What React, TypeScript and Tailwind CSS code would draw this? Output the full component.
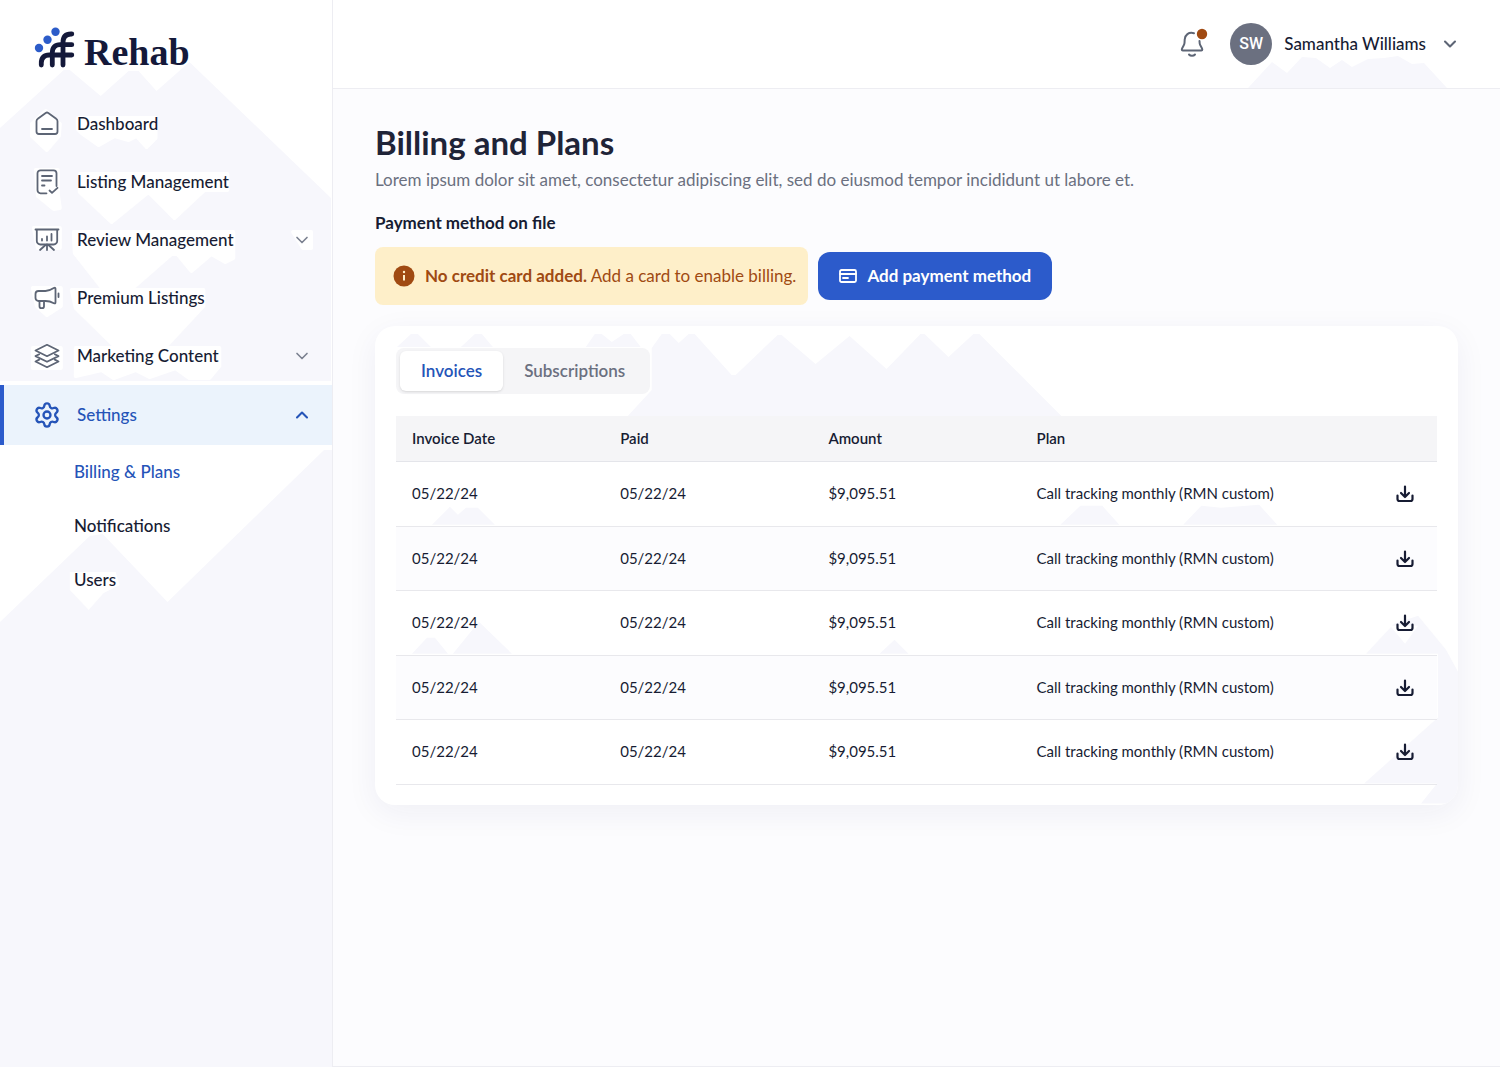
import React, { useState } from 'react';
import { ChevronDown, ChevronUp, Settings } from 'lucide-react';

type IconProps = { className?: string; children: React.ReactNode };

const LineIcon: React.FC<IconProps> = ({ className, children }) => (
  <svg
    viewBox="0 0 28 28"
    className={`h-7 w-7 shrink-0 ${className ?? ''}`}
    fill="none"
    stroke="currentColor"
    strokeWidth="1.8"
    strokeLinecap="round"
    strokeLinejoin="round"
    aria-hidden="true"
  >
    {children}
  </svg>
);

const HomeIcon = () => (
  <LineIcon>
    <path d="M3.5 11.2a3 3 0 0 1 1.3-2.5l7.9-5.8a2.4 2.4 0 0 1 2.6 0l7.9 5.8a3 3 0 0 1 1.3 2.500V21.500a2.500 2.500 0 0 1-2.500 2.500H6a2.500 2.500 0 0 1-2.500-2.500z" />
    <path d="M9 19h10" />
  </LineIcon>
);

const ListIcon = () => (
  <LineIcon>
    <path d="M13.500 25.300H7.500a3 3 0 0 1-3-3v-17a3 3 0 0 1 3-3h13a3 3 0 0 1 3 3V18" />
    <path d="M9 8h10M9 12.500h9M9 17.500h2.500M16.500 22.500l2.500 2.300 5.500-5" />
  </LineIcon>
);

const BoardIcon = () => (
  <LineIcon>
    <path d="M2.500 3.500h23M3.800 3.500V15a3.500 3.500 0 0 0 3.500 3.500h13.400a3.500 3.500 0 0 0 3.500-3.500V3.500" />
    <path d="M9 14.500v-1.500M14 14.500v-4M18.500 14.500V8M14 18.500V24M12.500 19l-5.500 5M15.500 19l5.500 5" />
  </LineIcon>
);

const MegaphoneIcon = () => (
  <LineIcon>
    <path d="M5.500 7h7c3 0 6-1.500 8.300-3q1.700-1 1.700.8v13.400q0 1.800-1.700 1C18.500 17.900 15.500 17 12.500 17H5.500A3 3 0 0 1 2.500 14v-4a3 3 0 0 1 3-3z" />
    <path d="M6.500 17v5.200a2 2 0 0 0 2 2h.5a2 2 0 0 0 2-2V17M25.500 9.500v3.500" />
  </LineIcon>
);

const LayersIcon = () => (
  <LineIcon>
    <path d="M14 2.800l11.500 5.700L14 14.200 2.500 8.500z" />
    <path d="M6.200 12.200l-3.700 1.900L14 19.800l11.500-5.700-3.700-1.900" />
    <path d="M6.200 17.600l-3.700 1.900L14 25.200l11.500-5.700-3.700-1.900" />
  </LineIcon>
);

const DownloadIcon = () => (
  <svg
    viewBox="0 0 24 24"
    className="h-6 w-6"
    fill="none"
    stroke="currentColor"
    strokeWidth="2.200"
    strokeLinecap="round"
    strokeLinejoin="round"
    aria-hidden="true"
  >
    <path d="M12 4.500v10M8 11l4 4 4-4M4.500 13.500V17a2 2 0 0 0 2 2h11a2 2 0 0 0 2-2v-3.500" />
  </svg>
);

const Logo = () => (
  <a href="#" className="flex h-10 items-center gap-2 text-[#14193a]">
    <svg viewBox="0 0 42 42" className="h-[42px] w-[42px] shrink-0" fill="none" aria-hidden="true">
      <g fill="#2c5cc9">
        <circle cx="21.500" cy="4.700" r="4.200" />
        <circle cx="13.500" cy="12.700" r="4.200" />
        <circle cx="5" cy="21" r="4.200" />
      </g>
      <g stroke="currentColor" strokeWidth="4.800" strokeLinecap="round">
        <path d="M7.300 38v-2q0-8 8-8h22.500" />
        <path d="M18.300 38V25.700q0-8 8-8h11.500" />
        <path d="M29 38V15.500q0-8.500 8-8.500h.8" />
      </g>
    </svg>
    <span className="pt-2 font-['Liberation_Serif',serif] text-[38px] leading-10 font-bold">Rehab</span>
  </a>
);

// Faint mountain ridges behind the navigation
const SidebarRidges = () => (
  <svg className="absolute inset-0 -z-10 h-full w-full" preserveAspectRatio="none" viewBox="0 0 333 1067" aria-hidden="true">
    <path fill="#f7f7fc" d="M0 128L64 70h6l31 26 28-25h10l18 20 33-29 142 136v183H0z" />
    <g fill="#fff" stroke="#fff" strokeWidth="4" strokeLinejoin="round">
      <path d="M78 118h78v20l-9 9-10-11-8 4-14-4-16 9-17-12-4-4z" />
      <path d="M32 124l14-13 14 13-1 12-12 14-15-14z" />
      <path d="M36 170h22v24l2 14-6 1-16-13z" />
      <path d="M80 174h148v16h-23l-30 28-26-26-37 30-32-30z" />
      <path d="M34 228h26v20H38zM74 232h160v26l-8 4-14-8-20 17-14-17h-6l-47 41h-17l-33-42z" />
      <path d="M33 288h28v18l-14 9-10-9zM72 290h132v16l-40 43h-46l-42-41z" />
      <path d="M33 348h28v20H33zM76 348h144v18l-10 12h-20l-14-10-26 9-14-7-22 8-12-8-26 6z" />
      <path d="M294 232h18v16h-8z" />
    </g>
    <path fill="#f7f7fc" d="M0 622l90-86 13-2 65 68 157-152h8v617H0z" />
    <path fill="#fff" d="M70 572h46l4 13-16 8-15 17-19-20z" />
  </svg>
);

const HeaderRidges = () => (
  <svg className="absolute right-[52px] bottom-0 -z-10 h-8 w-[200px]" viewBox="0 0 200 32" aria-hidden="true">
    <path fill="#f7f7fc" d="M0 32L24 6l15 11L54 1l14 1 14 10 12-8 10 7L120 3l16-1 14-2 14 8 12-1 23 25z" />
  </svg>
);

const CardRidges = () => (
  <svg
    className="absolute inset-0 -z-10 h-full w-full"
    preserveAspectRatio="none"
    viewBox="375 326 1084 479"
    aria-hidden="true"
  >
    <g fill="#f7f7fc">
      <path d="M397 347l14-13h7l13 13zM461 347l14-13h7l11 13zM586 347l9-13h7l10 8 12-8h7l10 13z" />
      <path d="M628 416l24-26v-42l10-14h8l9 9 10-9h6l37 41h4l42-40h4l34 29 34-28 37 33 34-35h4l24 23 25-23h6l82 82z" />
      <path d="M432 525l18-18 8 8 8-7h12l17 17zM1061 525l20-19h22l17 19zM1184 525l18-19 20 2 38-3 18 20z" />
      <path d="M412 654l15-16h8l13 16zM453 654l26-32 33 32zM880 654l15-14 14 14z" />
      <path d="M1367 654l28-30 24-8 28 34 12 22v132h-37l16-20h-73l74-66v-64z" />
    </g>
    <path fill="#fff" d="M1391 626h28l-13 18z" />
  </svg>
);

const navItems = [
  { label: 'Dashboard', icon: <HomeIcon />, expandable: false },
  { label: 'Listing Management', icon: <ListIcon />, expandable: false },
  { label: 'Review Management', icon: <BoardIcon />, expandable: true },
  { label: 'Premium Listings', icon: <MegaphoneIcon />, expandable: false },
  { label: 'Marketing Content', icon: <LayersIcon />, expandable: true },
];

const settingsItems = ['Billing & Plans', 'Notifications', 'Users'];

const invoices = Array.from({ length: 5 }, (_, id) => ({
  id,
  date: '05/22/24',
  paid: '05/22/24',
  amount: '$9,095.51',
  plan: 'Call tracking monthly (RMN custom)',
}));

const Sidebar = () => (
  <aside className="relative isolate w-[333px] shrink-0 overflow-hidden border-r border-[#ededf2] bg-white">
    <SidebarRidges />
    <div className="px-[34px] pt-7 pb-[27px]">
      <Logo />
    </div>
    <nav className="text-[17px] font-medium">
      {navItems.map((item) => (
        <a key={item.label} href="#" className="flex h-[58px] items-center pr-5 pl-[33px]">
          <span className="text-[#5d6575]">{item.icon}</span>
          <span className="ml-4 flex-1">{item.label}</span>
          {item.expandable && <ChevronDown className="h-5 w-5 text-[#7b8190]" strokeWidth={2} />}
        </a>
      ))}
      <button
        type="button"
        aria-expanded="true"
        className="flex h-[60px] w-full items-center border-l-4 border-[#2c5bcb] bg-[#ebf3fc] pr-5 pl-[29px] text-left text-[#2554b8]"
      >
        <Settings className="h-7 w-7" strokeWidth={2} />
        <span className="ml-4 flex-1">Settings</span>
        <ChevronUp className="h-5 w-5" strokeWidth={2.5} />
      </button>
      {settingsItems.map((label, i) => (
        <a
          key={label}
          href="#"
          className={`flex h-[54px] items-center pl-[74px] ${i === 0 ? 'text-[#2554b8]' : ''}`}
        >
          {label}
        </a>
      ))}
    </nav>
  </aside>
);

const Header = () => (
  <header className="relative isolate flex h-[89px] items-center justify-end border-b border-[#ededf2] bg-white pr-10">
    <HeaderRidges />
    <button type="button" aria-label="Alerts" className="text-[#5d6575]">
      <svg
        viewBox="0 0 32 32"
        className="h-8 w-8"
        fill="none"
        stroke="currentColor"
        strokeWidth="2"
        strokeLinecap="round"
        strokeLinejoin="round"
        aria-hidden="true"
      >
        <path d="M17 5.200C11.500 3.800 8 7 7.700 11.500l-.2 3.500c-.1 2.300-2.500 4.300-2.700 6.500 0 .6.300.9 1 .9h18.500c.7 0 1-.3 1-.9-.2-2-2.400-4-2.600-6l-.2-2.500" />
        <path d="M12 26.500c1.500 1.800 4.500 1.800 6 0" />
        <circle cx="25" cy="6" r="5.200" fill="#a04a12" stroke="none" />
      </svg>
    </button>
    <button type="button" className="ml-[21px] flex items-center">
      <span className="flex h-[42px] w-[42px] items-center justify-center rounded-full bg-[#6b7080] font-[Roboto,sans-serif] text-base font-medium text-white">
        SW
      </span>
      <span className="ml-3 text-[17px] font-medium">Samantha Williams</span>
      <ChevronDown className="ml-3.5 h-5 w-5 text-[#5d6575]" strokeWidth={2.5} />
    </button>
  </header>
);

const InvoiceTable = () => (
  <table className="mt-[22px] w-full table-fixed border-collapse text-left text-[15px]">
    <thead>
      <tr className="h-[45px] border-b border-[#e4e5ea] bg-[#f5f5f7]">
        <th className="pl-4 font-semibold">Invoice Date</th>
        <th className="pl-4 font-semibold">Paid</th>
        <th className="pl-4 font-semibold">Amount</th>
        <th className="pl-4 font-semibold" colSpan={2}>
          Plan
        </th>
      </tr>
    </thead>
    <tbody>
      {invoices.map((row) => (
        <tr key={row.id} className="h-[65px] border-b border-[#e8e8ec] even:h-16 even:bg-[#fcfcfe]">
          <td className="pl-4">{row.date}</td>
          <td className="pl-4">{row.paid}</td>
          <td className="pl-4">{row.amount}</td>
          <td className="pl-4 whitespace-nowrap">{row.plan}</td>
          <td className="pr-5 text-right">
            <button type="button" aria-label="Download invoice" className="align-middle">
              <DownloadIcon />
            </button>
          </td>
        </tr>
      ))}
    </tbody>
  </table>
);

const App: React.FC = () => {
  const [tab, setTab] = useState('Invoices');

  return (
    <div className="flex min-h-screen bg-[#fcfcfe] font-[Lato,sans-serif] text-[#171c33]">
      <Sidebar />
      <div className="flex min-w-0 flex-1 flex-col border-b border-[#ededf2]">
        <Header />
        <main className="px-[42px] pt-8">
          <h1 className="text-[33px] leading-[42px] font-bold text-[#1f2438]">Billing and Plans</h1>
          <p className="text-[17px] leading-[34px] text-[#6b7080]">
            Lorem ipsum dolor sit amet, consectetur adipiscing elit, sed do eiusmod tempor incididunt ut labore et.
          </p>

          <h2 className="mt-3.5 text-[17px] leading-6 font-bold">Payment method on file</h2>
          <div className="mt-3 flex items-center gap-2.5">
            <div className="flex h-[58px] items-center rounded-lg bg-[#feefc9] pr-3 pl-[18px] text-[17px] text-[#a04a12]">
              <svg viewBox="0 0 22 22" className="mr-2.5 h-[22px] w-[22px]" aria-hidden="true">
                <circle cx="11" cy="11" r="10.500" fill="currentColor" />
                <path d="M11 10v5.500" stroke="#feefc9" strokeWidth="2" />
                <circle cx="11" cy="7" r="1.200" fill="#feefc9" />
              </svg>
              <p>
                <strong className="font-bold">No credit card added.</strong> Add a card to enable billing.
              </p>
            </div>
            <button
              type="button"
              className="flex h-12 items-center rounded-xl bg-[#2c5bcb] px-[21px] text-[17px] font-bold text-white"
            >
              <svg
                viewBox="0 0 18 18"
                className="mr-2.5 h-[18px] w-[18px]"
                fill="none"
                stroke="currentColor"
                strokeWidth="1.800"
                strokeLinecap="round"
                aria-hidden="true"
              >
                <rect x="1" y="3" width="16" height="12" rx="1.500" />
                <path d="M1 7h16M4 11h5" />
              </svg>
              Add payment method
            </button>
          </div>

          {/* Invoices card */}
          <section className="relative isolate mt-[21px] overflow-hidden rounded-[20px] bg-white px-[21px] pt-[22px] pb-5 shadow-[0_8px_32px_rgba(40,40,100,0.06)]">
            <CardRidges />
            <div role="tablist" className="flex h-[46px] w-fit items-center rounded-lg bg-[#f5f5f7] p-1 text-[17px] font-semibold">
              {['Invoices', 'Subscriptions'].map((name) => (
                <button
                  key={name}
                  type="button"
                  role="tab"
                  aria-selected={tab === name}
                  onClick={() => setTab(name)}
                  className={`h-10 rounded-md px-[21px] ${
                    tab === name ? 'bg-white text-[#2554b8] shadow' : 'text-[#6b7080]'
                  }`}
                >
                  {name}
                </button>
              ))}
            </div>
            <InvoiceTable />
          </section>
        </main>
      </div>
    </div>
  );
};

export default App;
